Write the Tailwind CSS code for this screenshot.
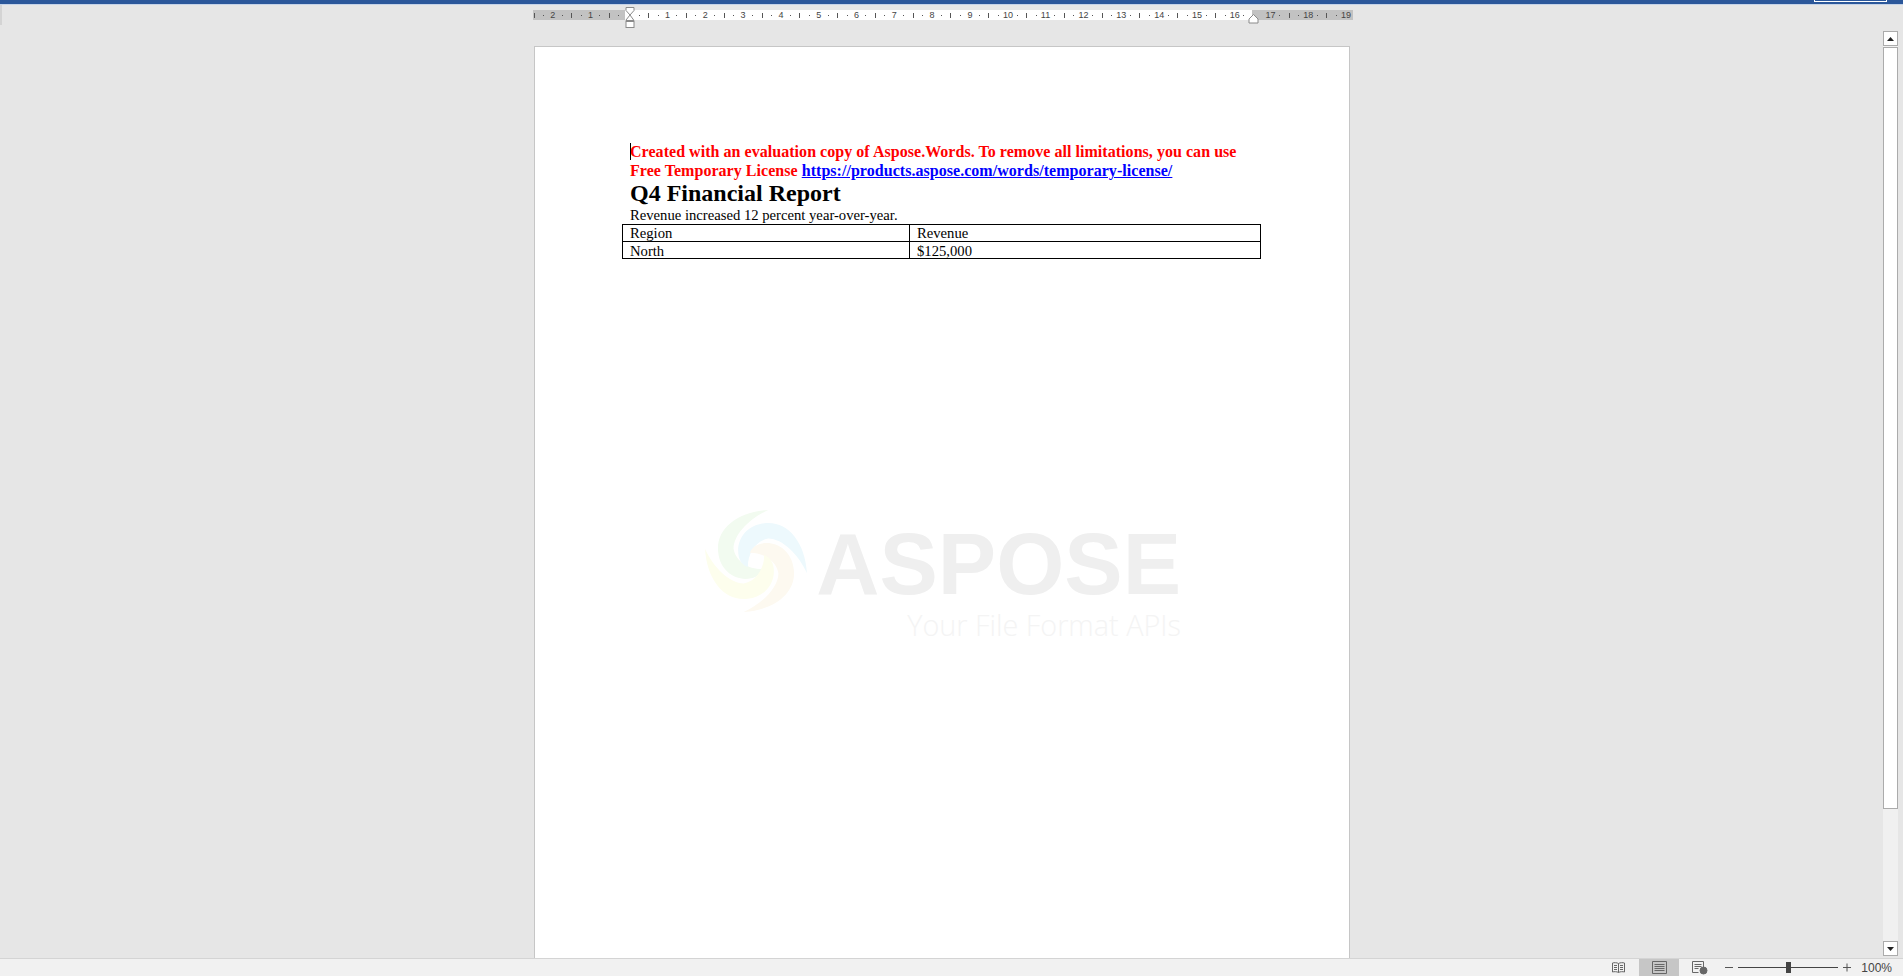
<!DOCTYPE html>
<html lang="en">
<head>
  <meta charset="UTF-8">
  <title>Q4 Financial Report - Word</title>
  <script src="https://cdn.jsdelivr.net/npm/@tailwindcss/browser@4"></script>
</head>
<body class="h-screen overflow-hidden flex flex-col bg-[#e6e6e6] font-['Liberation_Sans',sans-serif]">
  <!-- title bar remnant -->
  <div class="h-[5px] shrink-0 bg-[#2b579a] border-b border-[#c5d3e8] flex justify-end pr-[16px]">
    <div class="w-[73px] h-[2px] border-b border-x border-white"></div>
  </div>

  <div class="flex-1 min-h-0 flex">
    <div class="w-[2px] h-[20px] bg-[#d4d4d4]"></div>

    <main class="flex-1 min-w-0 flex flex-col pl-[531px] overflow-hidden">
      <!-- ruler -->
      <div class="relative mt-[5px] h-[10px] w-[820px] flex text-[9px] leading-[10px] text-[#444] shrink-0 font-['Liberation_Sans',sans-serif]">
        <div class="w-[92px] h-full bg-[#c2c2c2] flex overflow-hidden" id="rulerLeft"></div>
        <div class="w-[627px] h-full bg-white flex overflow-hidden" id="rulerMid"></div>
        <div class="w-[101px] h-full bg-[#c2c2c2] flex overflow-hidden" id="rulerRight"></div>
        <!-- indent markers -->
        <svg class="absolute left-[92px] top-[-3px]" width="11" height="23" viewBox="0 0 11 23">
          <path d="M1 .5h8v3L5 8l4 5.500H1V13L5 8 1 3.500z" fill="#fff" stroke="#8a8a8a"/>
          <rect x="1" y="14.500" width="8" height="6" fill="#fff" stroke="#8a8a8a"/>
        </svg>
        <svg class="absolute left-[715px] top-[4px]" width="11" height="10" viewBox="0 0 11 10">
          <path d="M5.500.5L10 5v4H1V5z" fill="#fff" stroke="#8a8a8a"/>
        </svg>
      </div>

      <!-- page -->
      <div class="relative mt-[26px] ml-[1px] w-[816px] flex-1 bg-white border-x border-t border-[#c6c6c6] pt-[95px] pl-[95px] font-['Liberation_Serif',serif] text-black overflow-hidden">
        <!-- watermark -->
        <div class="absolute left-[170px] top-[463px] w-[476px] h-[190px] text-right pointer-events-none">
          <svg class="absolute left-0 top-0" width="102" height="102" viewBox="0 0 100 100">
            <path d="M62 0C30 2 10 20 13 42c2 18 17 28 32 25 5-1 9-4 11-9-14 0-26-8-28-20 0-14 16-30 34-38z" fill="#f2fbf0"/>
            <path d="M62 0C30 2 10 20 13 42c2 18 17 28 32 25 5-1 9-4 11-9-14 0-26-8-28-20 0-14 16-30 34-38z" fill="#edf9fd" transform="rotate(90 50 50)"/>
            <path d="M62 0C30 2 10 20 13 42c2 18 17 28 32 25 5-1 9-4 11-9-14 0-26-8-28-20 0-14 16-30 34-38z" fill="#fdf9f0" transform="rotate(180 50 50)"/>
            <path d="M62 0C30 2 10 20 13 42c2 18 17 28 32 25 5-1 9-4 11-9-14 0-26-8-28-20 0-14 16-30 34-38z" fill="#fdfeed" transform="rotate(270 50 50)"/>
          </svg>
          <div class="absolute right-0 top-[11px] font-['Liberation_Sans',sans-serif] font-bold text-[87.5px] leading-[86px] text-[#efefef]">ASPOSE</div>
          <div class="absolute right-0 top-[98px] font-['Open_Sans',sans-serif] font-light text-[28.8px] leading-[34px] text-[#f4f4f4]">Your File Format APIs</div>
        </div>

        <div class="relative">
          <div class="absolute left-0 top-[1px] w-px h-[17px] bg-black"></div>
          <p class="text-[16px] leading-[19px] font-bold text-[#ff0000] tracking-[0.04px] w-[630px]">Created with an evaluation copy of Aspose.Words. To remove all limitations, you can use<br>Free Temporary License <a class="text-[#0000ff] underline">https://products.aspose.com/words/temporary-license/</a></p>
          <h1 class="text-[24px] leading-[27px] font-bold">Q4 Financial Report</h1>
          <p class="text-[14.67px] leading-[17px]">Revenue increased 12 percent year-over-year.</p>
          <table class="ml-[-8px] w-[639px] table-fixed border-collapse text-[14.67px] leading-[16px]">
            <tbody>
              <tr class="h-[17px]">
                <td class="w-[287px] border border-black px-[7px] py-0">Region</td>
                <td class="border border-black px-[7px] py-0">Revenue</td>
              </tr>
              <tr class="h-[17px]">
                <td class="border border-black px-[7px] pt-[2px] pb-0 leading-[14px]">North</td>
                <td class="border border-black px-[7px] pt-[2px] pb-0 leading-[14px]">$125,000</td>
              </tr>
            </tbody>
          </table>
        </div>
      </div>
    </main>

    <!-- scrollbar -->
    <div class="w-[15px] mr-[5px] mt-[26px] mb-[2px] bg-[#f0f0f0] flex flex-col justify-between">
      <div>
        <div class="h-[15px] bg-white border border-[#ababab] flex items-center justify-center">
          <svg width="7" height="4" viewBox="0 0 7 4"><path d="M3.500 0L7 4H0z" fill="#222"/></svg>
        </div>
        <div class="h-[762px] mt-px bg-white border border-[#ababab]"></div>
      </div>
      <div class="h-[15px] bg-white border border-[#ababab] flex items-center justify-center">
        <svg width="7" height="4" viewBox="0 0 7 4"><path d="M0 0h7L3.500 4z" fill="#222"/></svg>
      </div>
    </div>
  </div>

  <!-- status bar -->
  <footer class="h-[18px] shrink-0 bg-[#f1f1f1] border-t border-[#d4d4d4] flex items-center justify-end text-[#444]">
    <svg class="mr-[13px]" width="15" height="13" viewBox="0 0 15 13" fill="none" stroke="#666"><path d="M7.500 2.500C6 1.500 3 1.500 1.500 2v9c1.500-.5 4.500-.5 6 .5 1.500-1 4.500-1 6-.5V2c-1.500-.5-4.500-.5-6 .5zM7.500 2.500v9M3 4.500h3M3 6.500h3M3 8.500h3M9 4.500h3M9 6.500h3M9 8.500h3"/></svg>
    <div class="w-[40px] h-full bg-[#c6c6c6] flex items-center justify-center">
      <svg width="15" height="13" viewBox="0 0 15 13" fill="none" stroke="#666"><path d="M.5.500h14v12H.5zM2.500 3.500h10M2.500 5.500h10M2.500 7.500h10M2.500 9.500h10"/></svg>
    </div>
    <svg class="ml-[13px] mr-[16px]" width="16" height="14" viewBox="0 0 16 14" fill="none" stroke="#666"><path d="M.5.500h11v8M.5.500v11h6M2.500 3.500h7M2.500 5.500h7M2.500 7.500h4"/><circle cx="11.500" cy="9.500" r="3.500" fill="#666"/></svg>
    <svg width="10" height="9" viewBox="0 0 10 9"><path d="M1 4.500h8" stroke="#555"/></svg>
    <div class="relative w-[100px] h-px bg-[#444] mx-[4px]">
      <div class="absolute left-[48px] top-[-5px] w-[5px] h-[11px] bg-[#444]"></div>
    </div>
    <svg width="10" height="9" viewBox="0 0 10 9"><path d="M1 4.500h8M5 .5v8" stroke="#555"/></svg>
    <span class="ml-[9px] mr-[11px] text-[12px]">100%</span>
  </footer>

  <script>
    // one ruler cell per cm: number, dot, tick, dot (computed, 37.8px per cm)
    function cells(labels, offsetPx, lead) {
      let html = offsetPx ? `<div style="width:${offsetPx}px" class="shrink-0 flex items-center">${lead || ""}</div>` : "";
      labels.forEach(n => {
        html += `<div class="w-[37.8px] shrink-0 grid grid-cols-4 items-center">
          <span class="text-center">${n}</span>
          <span class="justify-self-center w-px h-px bg-[#555]"></span>
          <span class="justify-self-center w-px h-[5px] bg-[#555]"></span>
          <span class="justify-self-center w-px h-px bg-[#555]"></span>
        </div>`;
      });
      return html;
    }
    const leadLeft = `<span class="ml-px w-px h-[5px] bg-[#555]"></span><span class="ml-[8px] w-px h-px bg-[#555]"></span>`;
    const leadRight = `<span class="ml-[2px] w-px h-px bg-[#555]"></span>`;
    document.getElementById("rulerLeft").innerHTML = cells(["2", "1"], 15, leadLeft);
    document.getElementById("rulerMid").innerHTML = cells(["", 1, 2, 3, 4, 5, 6, 7, 8, 9, 10, 11, 12, 13, 14, 15, 16], 0);
    document.getElementById("rulerRight").innerHTML = cells([17, 18, 19], 13.5, leadRight);
  </script>
</body>
</html>
